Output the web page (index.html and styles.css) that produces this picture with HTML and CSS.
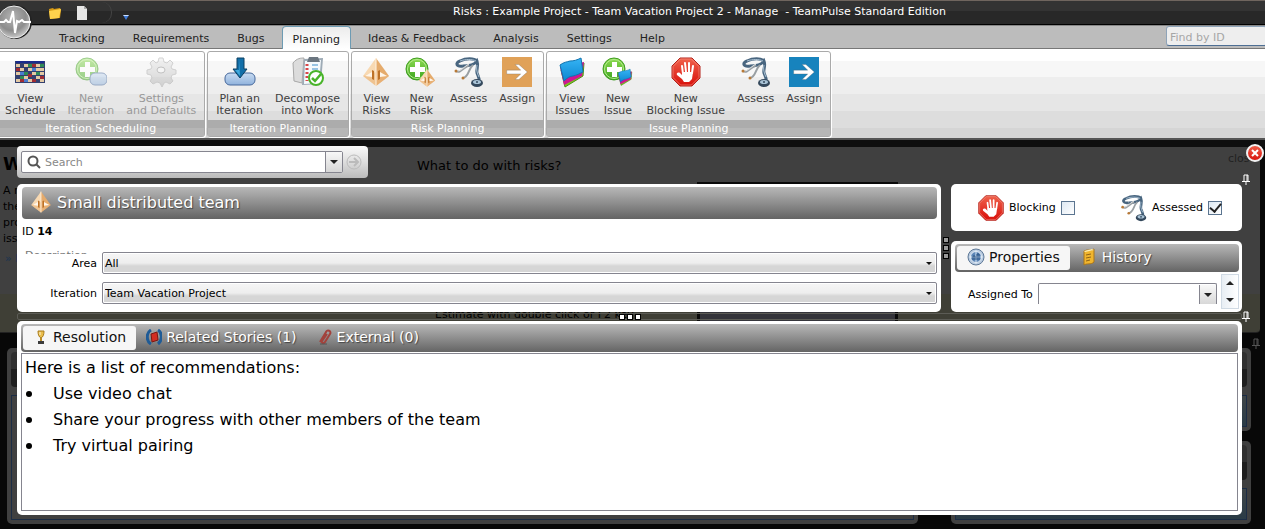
FILE: index.html
```html
<!DOCTYPE html>
<html lang="en">
<head>
  <meta charset="UTF-8">
  <meta name="viewport" content="width=device-width, initial-scale=1.0">
  <title>TeamPulse - Risks</title>
  <link rel="stylesheet" href="styles.css">
</head>
<body>
  <!-- shared icons -->
  <svg class="defs" width="0" height="0" aria-hidden="true">
    <defs>
      <linearGradient id="g-green" x1="0" y1="0" x2="0" y2="1"><stop offset="0" stop-color="#8edb52"/><stop offset="1" stop-color="#3aa41c"/></linearGradient>
      <linearGradient id="g-red" x1="0" y1="0" x2="0" y2="1"><stop offset="0" stop-color="#f0624c"/><stop offset="1" stop-color="#d80f0a"/></linearGradient>
      <linearGradient id="g-blue" x1="0" y1="0" x2="0" y2="1"><stop offset="0" stop-color="#36b4f5"/><stop offset="1" stop-color="#0b86d0"/></linearGradient>
      <linearGradient id="g-pill" x1="0" y1="0" x2="0" y2="1"><stop offset="0" stop-color="#c9dcf2"/><stop offset="1" stop-color="#8fb2dc"/></linearGradient>
      <linearGradient id="g-gear" x1="0" y1="0" x2="0" y2="1"><stop offset="0" stop-color="#ececec"/><stop offset="1" stop-color="#b4b4b4"/></linearGradient>
      <radialGradient id="g-ball" cx="0.45" cy="0.35" r="0.7"><stop offset="0" stop-color="#b4b4b4"/><stop offset="0.6" stop-color="#8c8c8c"/><stop offset="1" stop-color="#d8d8d8"/></radialGradient>
    </defs>
    <symbol id="i-risk" viewBox="0 0 32 32">
      <path d="M16 2L3 20l13 10z" fill="#f8d9b2"/>
      <path d="M16 2l13 18-13 10z" fill="#e5ab6c"/>
      <path d="M3 20l13-4 13 4-13 10z" fill="#e9b47a" opacity=".6"/>
      <path d="M12 14v9l2 1v-9zM20 14v9l-2 1v-9z" fill="#bd7126"/>
      <path d="M5 20l7-4v5zM27 20l-7-4v5z" fill="#fff6ea"/>
      <path d="M16 2v28" stroke="#fff3e2"/>
    </symbol>
    <symbol id="i-plus" viewBox="0 0 32 32">
      <circle cx="12" cy="13" r="11" fill="url(#g-green)" stroke="#3f9d22"/>
      <circle cx="12" cy="13" r="9.5" fill="none" stroke="#b5ec8d"/>
      <path d="M10 6h5v5h5v5h-5v5h-5v-5H5v-5h5z" fill="#fff"/>
    </symbol>
    <symbol id="i-pages" viewBox="0 0 32 32">
      <path d="M5 14l4 17 18-11 1-13z" fill="#7cc522" stroke="#4c9210"/>
      <path d="M4 11l4 18 18-9 2-14z" fill="#cf1691"/>
      <path d="M4 9c4-3 7-3 10-4 4 0 7-1 11-3l2 14c-4 2-6 3-10 4-3 0-6 2-9 5z" fill="url(#g-blue)" stroke="#1173af"/>
    </symbol>
    <symbol id="i-stop" viewBox="0 0 32 32">
      <path d="M10 2h12l8 8v12l-8 8H10l-8-8V10z" fill="url(#g-red)" stroke="#b3221a"/>
      <path d="M10.500 3h11l7.500 7.500v11L21.500 29h-11L3 21.500v-11z" fill="none" stroke="#f69a8a" opacity=".6"/>
      <path d="M12 10l1 8M15 7l1 9M19 7v10M23 10l-1 7" stroke="#fff" stroke-width="2" stroke-linecap="round"/>
      <path d="M12 16h11l-1 7-3 3h-5l-2-3-5-4c-1-2 1-3 3-2l2 2z" fill="#fff"/>
    </symbol>
    <symbol id="i-steth" viewBox="0 0 32 32">
      <path d="M10 10C3 11 2 7 7 5c6-3 14-3 17 0" fill="none" stroke="#48657f" stroke-width="3"/>
      <path d="M10 10c7 0 12-2 14-5 2 5-1 8 0 12 1 3 3 5 2 9" fill="none" stroke="#48657f" stroke-width="3"/>
      <path d="M7 5c6-2 12-2 16 0M24 9c-1 4 0 8 2 12" fill="none" stroke="#a9c0d2"/>
      <path d="M3 15c4 3 7-3 13-6M10 22c6-1 5-9 10-13" fill="none" stroke="#999fa3" stroke-width="2"/>
      <path d="M3 14c4 3 7-3 13-6" fill="none" stroke="#e3e5e6"/>
      <circle cx="3" cy="15" r="1.500" fill="#b87936"/><circle cx="10" cy="22" r="1.500" fill="#b87936"/>
      <ellipse cx="24" cy="27" rx="6" ry="4" fill="#34485c"/>
      <ellipse cx="24" cy="26" rx="4" ry="2" fill="#a9c3d6"/>
      <circle cx="24" cy="26" r="1" fill="#34485c"/>
    </symbol>
    <symbol id="i-arrow" viewBox="0 0 32 32">
      <path d="M5 14h15l-6-6h4l9 8-9 8h-4l6-6H5z" fill="#fff" stroke="#5b5b5b" stroke-opacity=".3"/>
    </symbol>
    <symbol id="i-pin" viewBox="0 0 8 11">
      <path d="M2 7V1h4v6M5 1v6M0 7.500h8M4 8v3" fill="none" stroke="currentColor"/>
    </symbol>
  </svg>

  <header class="title-bar">
    <div class="quick-access">
      <button type="button" aria-label="Open">
        <svg width="14" height="14" viewBox="0 0 14 14"><path d="M1 3l4-1 1 1 6-1 1 2-1 8-10 1z" fill="#d79a14"/><path d="M1 5l12-2-2 9-9 1z" fill="#ffd34d"/></svg>
      </button>
      <button type="button" aria-label="New">
        <svg width="12" height="14" viewBox="0 0 12 14"><path d="M1 0h7l3 3v11H1z" fill="#e6e6e6"/><path d="M8 0v3h3z" fill="#aaa"/></svg>
      </button>
    </div>
    <button type="button" class="quick-more" aria-label="More">
      <svg width="6" height="5" viewBox="0 0 6 5"><path d="M0 0h6L3 5z" fill="#3d79d8"/><path d="M0 0h6L5 1H1z" fill="#cfe0fa"/></svg>
    </button>
    <span class="window-title">Risks : Example Project - Team Vacation Project 2 - Manage &nbsp;- TeamPulse Standard Edition</span>
    <button type="button" class="app-button" aria-label="TeamPulse menu">
      <svg width="36" height="38" viewBox="0 0 36 38">
        <circle cx="17" cy="19" r="17" fill="#222"/>
        <circle cx="16" cy="19" r="16" fill="url(#g-ball)" stroke="#eee"/>
        <path d="M0 19h6l2-2 2 2h2l3-11 2 22 2-12 2 1 3-2 2 2h7" fill="none" stroke="#fff" stroke-width="2"/>
      </svg>
    </button>
  </header>

  <nav class="tabs">
    <button type="button">Tracking</button>
    <button type="button">Requirements</button>
    <button type="button">Bugs</button>
    <button type="button" class="active">Planning</button>
    <button type="button">Ideas &amp; Feedback</button>
    <button type="button">Analysis</button>
    <button type="button">Settings</button>
    <button type="button">Help</button>
    <input type="text" class="find" placeholder="Find by ID" aria-label="Find by ID">
  </nav>

  <div class="ribbon">
    <section class="group first">
      <div class="tools">
        <button type="button">
          <svg width="32" height="32" viewBox="0 0 32 32">
            <path d="M1 5h30v22H1z" fill="#33406f"/>
            <path d="M2 8h4v3H2zM10 8h4v3h-4zM22 8h4v3h-4zM6 12h4v3H6zM14 12h4v3h-4zM22 12h8v3h-8zM2 16h4v3H2zM18 16h4v3h-4zM26 16h4v3h-4zM10 20h4v3h-4zM22 20h4v3h-4zM2 23h4v3H2zM14 23h4v3h-4zM26 23h4v3h-4z" fill="#e3c9a4"/>
            <path d="M14 8h4v3h-4zM10 16h4v3h-4zM26 8h4v3h-4zM22 16h4v3h-4zM6 20h4v3H6z" fill="#2f8a56"/>
            <path d="M18 8h4v3h-4zM2 12h4v3H2zM14 18h4v3h-4zM26 20h4v3h-4zM18 23h4v3h-4zM6 23h4v3H6z" fill="#a02c34"/>
            <path d="M18 12h4v3h-4zM6 16h4v3H6zM10 23h4v3h-4z" fill="#4a7cd0"/>
            <path d="M2 6h28" stroke="#1a2c8c" stroke-width="2"/>
          </svg>
          <span>View<br>Schedule</span>
        </button>
        <button type="button" disabled>
          <svg width="32" height="32" viewBox="0 0 32 32"><use href="#i-plus"/><rect x="15" y="17" width="17" height="12" rx="5" fill="url(#g-pill)" stroke="#47699c"/></svg>
          <span>New<br>Iteration</span>
        </button>
        <button type="button" disabled>
          <svg width="32" height="32" viewBox="0 0 32 32">
            <path d="M14 2h4l1 4 3 1 3-3 3 3-2 4 1 2 4 1v4l-4 1-1 3 2 3-3 3-4-2-2 1-2 4-2-4-3-1-4 2-3-3 2-3-1-3-4-1v-4l4-1 1-2-2-4 3-3 3 3 2-1z" fill="url(#g-gear)" stroke="#aaa"/>
            <ellipse cx="16" cy="14" rx="4" ry="3" fill="#f4f4f4" stroke="#8c8c8c"/>
          </svg>
          <span>Settings<br>and Defaults</span>
        </button>
      </div>
      <h2>Iteration Scheduling</h2>
    </section>
    <section class="group">
      <div class="tools">
        <button type="button">
          <svg width="32" height="32" viewBox="0 0 32 32"><rect x="1" y="17" width="30" height="12" rx="5" fill="url(#g-pill)" stroke="#47699c"/><path d="M13 2h7v11h3l-7 9-7-9h4z" fill="#126fa9" stroke="#0c4063"/><path d="M15 3v11h-4l5 6z" fill="#3fa8dc"/></svg>
          <span>Plan an<br>Iteration</span>
        </button>
        <button type="button">
          <svg width="32" height="32" viewBox="0 0 32 32">
            <path d="M1 7c4-5 8-5 11-5l-2 25-8-2z" fill="#dcdcdc" stroke="#a8a8a8"/>
            <path d="M12 3l19-1-2 26-19 1z" fill="#9eabb6"/>
            <path d="M13 5l16-1-2 23-15 1z" fill="#f5fafd"/>
            <path d="M17 1h9l2 5H15z" fill="#6b7680"/>
            <path d="M15 8v17" stroke="#d8484a" stroke-width="3" stroke-dasharray="2 2"/>
            <path d="M20 9h6M20 13h6M20 17h5" stroke="#98c4e4" stroke-width="2"/>
            <circle cx="24" cy="22" r="7" fill="#fff" stroke="#49b42a" stroke-width="2"/>
            <path d="M20 22l3 3 6-7" fill="none" stroke="#49b42a" stroke-width="2.500"/>
          </svg>
          <span>Decompose<br>into Work</span>
        </button>
      </div>
      <h2>Iteration Planning</h2>
    </section>
    <section class="group">
      <div class="tools">
        <button type="button"><svg width="32" height="32"><use href="#i-risk"/></svg><span>View<br>Risks</span></button>
        <button type="button"><svg width="32" height="32" viewBox="0 0 32 32"><use href="#i-plus"/><use href="#i-risk" x="12" y="12" width="20" height="20"/></svg><span>New<br>Risk</span></button>
        <button type="button"><svg width="32" height="32"><use href="#i-steth"/></svg><span>Assess</span></button>
        <button type="button"><svg class="assign risk" width="30" height="30"><use href="#i-arrow"/></svg><span>Assign</span></button>
      </div>
      <h2>Risk Planning</h2>
    </section>
    <section class="group">
      <div class="tools">
        <button type="button"><svg width="32" height="32"><use href="#i-pages"/></svg><span>View<br>Issues</span></button>
        <button type="button"><svg width="32" height="32" viewBox="0 0 32 32"><use href="#i-plus"/><use href="#i-pages" x="14" y="12" width="18" height="18"/></svg><span>New<br>Issue</span></button>
        <button type="button"><svg width="32" height="32"><use href="#i-stop"/></svg><span>New<br>Blocking Issue</span></button>
        <button type="button"><svg width="32" height="32"><use href="#i-steth"/></svg><span>Assess</span></button>
        <button type="button"><svg class="assign issue" width="30" height="30"><use href="#i-arrow"/></svg><span>Assign</span></button>
      </div>
      <h2>Issue Planning</h2>
    </section>
  </div>

  <main class="workspace">
    <!-- dimmed page under the editor -->
    <div class="backdrop">
      <div class="help">
        <div class="help-side">
          <h1>W</h1>
          <p>A r<br>the<br>pro<br>iss</p>
          <a href="#">» P</a>
        </div>
        <div class="help-main">
          <h3>What to do with risks?</h3>
          <div class="shot"></div>
          <p>Estimate with double click or F2 key</p>
        </div>
        <span class="close-text">close</span>
      </div>
      <svg class="pin dim" width="8" height="11"><use href="#i-pin"/></svg>
      <div class="boards">
        <div class="board"><div class="board-head"></div><div class="board-body"></div></div>
        <div class="board-col">
          <div class="board"><div class="board-head"></div><div class="board-body"></div></div>
          <div class="board"><div class="board-head"></div><div class="board-body"></div></div>
        </div>
      </div>
    </div>

    <div class="editor">
      <form class="search-panel">
        <div class="search-box">
          <svg width="14" height="14" viewBox="0 0 14 14"><circle cx="6" cy="6" r="4.500" fill="none" stroke="#555" stroke-width="2"/><path d="M9 9l4 4" stroke="#555" stroke-width="2"/></svg>
          <input type="text" placeholder="Search" aria-label="Search">
          <button type="button" class="drop" aria-label="Search options"></button>
        </div>
        <button type="button" class="go" aria-label="Go">
          <svg width="16" height="16" viewBox="0 0 16 16"><circle cx="8" cy="8" r="7" fill="none" stroke="#bbb"/><path d="M3 8h9M8 4l4 4-4 4" fill="none" stroke="#bbb" stroke-width="2"/></svg>
        </button>
      </form>

      <div class="top-row">
        <section class="card details">
          <h2 class="bar heading"><svg width="24" height="24"><use href="#i-risk"/></svg>Small distributed team</h2>
          <p class="item-id">ID <b>14</b></p>
          <div class="description">Description</div>
          <div class="field">
            <label for="area">Area</label>
            <div class="select"><select id="area"><option>All</option></select></div>
          </div>
          <div class="field">
            <label for="iteration">Iteration</label>
            <div class="select"><select id="iteration"><option>Team Vacation Project</option></select></div>
          </div>
        </section>
        <div class="splitter-v"><i></i><i></i><i></i></div>
        <div class="side">
          <section class="card flags">
            <label><svg width="28" height="28"><use href="#i-stop"/></svg>Blocking <input type="checkbox"></label>
            <label><svg width="28" height="28"><use href="#i-steth"/></svg>Assessed <input type="checkbox" checked></label>
          </section>
          <section class="card props">
            <div class="bar tab-bar">
              <button type="button" class="active">
                <svg width="18" height="18" viewBox="0 0 18 18"><circle cx="9" cy="9" r="8" fill="#b9cbe0" stroke="#5d7896"/><circle cx="9" cy="9" r="5.500" fill="#5d87b8" stroke="#e6eef6"/><path d="M9 2v14M2 9h14" stroke="#dce8f4"/><path d="M6 12V8h2v4M10 12V6h2v6" stroke="#2b5382" fill="none"/></svg>
                Properties
              </button>
              <button type="button">
                <svg width="18" height="18" viewBox="0 0 18 18"><path d="M4 3c3-2 7 0 10-2v13c-3 3-7 1-10 3z" fill="#f0b52e" stroke="#a8741a"/><path d="M6 7l5-1M6 10l5-1M6 13l4-1" stroke="#8f6315"/><path d="M4 3l8-2 2 1-9 2z" fill="#fff0b5"/></svg>
                History
              </button>
            </div>
            <div class="props-body">
              <div class="assigned">
                <label for="assigned">Assigned To</label>
                <div class="combo"><input type="text" id="assigned"><button type="button" class="drop" aria-label="Choose person"></button></div>
              </div>
              <div class="scroller"><button type="button" class="up" aria-label="Scroll up"></button><button type="button" class="down" aria-label="Scroll down"></button></div>
            </div>
          </section>
        </div>
      </div>

      <div class="splitter-h"><i></i><i></i><i></i></div>

      <section class="card notes">
        <div class="bar tab-bar">
          <button type="button" class="active">
            <svg width="16" height="16" viewBox="0 0 16 16"><path d="M5 2h6c0 4-1 6-3 7-2-1-3-3-3-7z" fill="#e9bd4c" stroke="#a87b1c"/><path d="M7 3v3" stroke="#fff6d2"/><path d="M8 9v3" stroke="#b98a25" stroke-width="2"/><path d="M5 12h6v3H5z" fill="#3c3c3c"/></svg>
            Resolution
          </button>
          <button type="button">
            <svg width="16" height="16" viewBox="0 0 16 16"><path d="M5 5l6-2 1 8-6 2z" fill="#d22d22" stroke="#7c1712"/><path d="M5 1C0 4 0 12 5 15M12 1c5 3 4 11 0 14" fill="none" stroke="#1f5b96" stroke-width="3"/></svg>
            Related Stories (1)
          </button>
          <button type="button">
            <svg width="16" height="16" viewBox="0 0 16 16"><path d="M3 13L9 3c1-3 6-1 4 2l-5 8c-1 2-4 1-3-1l5-7" fill="none" stroke="#a2423c" stroke-width="2"/><path d="M3 15h7" stroke="#555"/></svg>
            External (0)
          </button>
        </div>
        <div class="notes-body">
          <p>Here is a list of recommendations:</p>
          <ul>
            <li>Use video chat</li>
            <li>Share your progress with other members of the team</li>
            <li>Try virtual pairing</li>
          </ul>
        </div>
      </section>
    </div>

    <button type="button" class="close" aria-label="Close">
      <svg width="18" height="18" viewBox="0 0 18 18"><circle cx="9" cy="9" r="8" fill="url(#g-red)" stroke="#f2f2f2" stroke-width="2"/><path d="M6 6l6 6M12 6l-6 6" stroke="#fff" stroke-width="2"/></svg>
    </button>
    <svg class="pin pin-top" width="8" height="11"><use href="#i-pin"/></svg>
    <svg class="pin pin-mid" width="8" height="11"><use href="#i-pin"/></svg>
  </main>
</body>
</html>
```

FILE: styles.css
```css
* {
  box-sizing: border-box;
}
body {
  margin: 0;
  min-height: 100vh;
  display: flex;
  flex-direction: column;
  overflow: hidden;
  background: #080808;
  font-family: "DejaVu Sans", Verdana, sans-serif;
  font-size: 11px;
  color: #000;
}
button, input, select {
  font: inherit;
  color: inherit;
}
button {
  margin: 0;
  padding: 0;
  border: 0;
  background: none;
}
h1, h2, h3, p, ul {
  margin: 0;
  padding: 0;
  font-weight: normal;
}
svg {
  display: block;
  flex: none;
}
.defs {
  position: absolute;
}

/* title bar */
.title-bar {
  position: relative;
  display: flex;
  align-items: center;
  height: 25px;
  border-top: 1px solid #6f655e;
  border-bottom: 1px solid #000;
  background: linear-gradient(#333 10px, #282828 10px);
}
.quick-access {
  display: flex;
  align-items: center;
  gap: 14px;
  width: 112px;
  height: 21px;
  padding-left: 48px;
  border-right: 1px solid #444;
  border-radius: 0 10px 10px 0;
}
.quick-more {
  margin: 10px 0 0 11px;
}
.window-title {
  flex: 1;
  padding: 0 0 2px 5px;
  text-align: center;
  color: #fff;
  white-space: pre;
}
.app-button {
  position: absolute;
  left: -2px;
  top: 2px;
  z-index: 2;
}

/* tabs */
.tabs {
  display: flex;
  align-items: flex-end;
  height: 24px;
  padding-left: 45px;
  border-top: 1px solid #888;
  border-bottom: 1px solid #777;
  background: #bcbcbc;
}
.tabs button {
  height: 22px;
  padding: 2px 13px 0;
  border: 1px solid transparent;
  border-bottom: 0;
  color: #222;
}
.tabs .active {
  padding: 2px 10px 0;
  margin: 0 3px -1px;
  height: 23px;
  border-color: #6d9bb3;
  border-radius: 4px 4px 0 0;
  background: linear-gradient(#ececec, #fff);
}
.find {
  width: 101px;
  height: 20px;
  margin: 0 -2px 2px auto;
  padding: 2px 3px 0;
  border: 1px solid #8ea3b8;
  border-bottom-color: #4e6f94;
  border-radius: 3px;
  background: #eee;
}
.find::placeholder {
  color: #a6a6a6;
  opacity: 1;
}

/* ribbon */
.ribbon {
  display: flex;
  gap: 2px;
  padding: 2px 0 1px;
  border-bottom: 2px solid #555;
  background: linear-gradient(#fff 12px, #f7f7f7 12px 28px, #eee 28px 45px, #e6e6e6 45px 62px, #ddd 62px 79px, #d5d5d5 79px);
}
.group {
  border: 1px solid #aaa;
  border-radius: 3px;
  box-shadow: 1px 1px 0 #fff;
}
.group.first {
  margin-left: -4px;
}
.group h2 {
  height: 16px;
  line-height: 17px;
  font-size: 11px;
  text-align: center;
  color: #fff;
  background: linear-gradient(#acacac 8px, #b6b6b6 8px);
}
.tools {
  display: flex;
  height: 68px;
  padding: 4px 2px 0;
}
.tools button {
  display: flex;
  flex-direction: column;
  align-items: center;
  min-width: 45px;
  padding: 0 6px;
  line-height: 12px;
  color: #404040;
}
.tools span {
  margin-top: 5px;
}
.tools button:disabled {
  color: #999;
}
.tools button:disabled svg {
  opacity: .5;
}
.assign {
  margin: 1px;
}
.assign.risk {
  background: #e0a158;
}
.assign.issue {
  background: #1783bd;
}

/* dimmed page */
.workspace {
  position: relative;
  flex: 1;
  display: flex;
  flex-direction: column;
  padding-top: 7px;
  background: #0e0e0e;
}
.backdrop {
  flex: 1;
  display: flex;
  flex-direction: column;
  background: #080808;
}
.help {
  display: flex;
  height: 186px;
  margin-right: 5px;
  overflow: hidden;
  border-bottom: 1px solid #222;
  border-radius: 0 0 4px 0;
  background: linear-gradient(#404040 147px, #3f3f36 147px);
}
.help-side {
  width: 417px;
  padding: 5px 0 0 3px;
}
.help-side h1 {
  font-size: 18px;
  font-weight: bold;
  line-height: 24px;
}
.help-side p {
  padding-top: 7px;
  line-height: 16px;
}
.help-side a {
  display: block;
  padding: 5px 2px;
  color: #1a3450;
  text-decoration: none;
}
.help-main {
  flex: 1;
}
.help-main h3 {
  padding-top: 11px;
  font-size: 13px;
  line-height: 16px;
}
.help-main p {
  margin-top: -34px;
  padding-left: 18px;
  line-height: 14px;
}
.shot {
  width: 201px;
  height: 160px;
  margin: 8px 0 0 280px;
  border: 3px solid #0a0a0a;
  background: #34343a;
}
.close-text {
  width: 32px;
  padding-top: 5px;
  color: #222;
}
.pin {
  color: #fff;
}
.pin.dim {
  margin: 5px 5px -11px auto;
  color: #555;
}
.boards {
  flex: 1;
  display: flex;
  gap: 33px;
  margin: 10px 14px 5px 7px;
}
.board {
  flex: 1;
  display: flex;
  flex-direction: column;
  padding: 4px;
  border-radius: 5px;
  background: #404040;
}
.board-head {
  height: 35px;
  border-radius: 4px;
  background: linear-gradient(#303030 50%, #1e1e1e 50%);
}
.board-body {
  flex: 1;
  margin-top: 8px;
  border: 1px solid #1c2c44;
  background: linear-gradient(#404648, #2a3b46);
}
.boards > .board > .board-body {
  background: #404040;
}
.board-col {
  display: flex;
  flex-direction: column;
  gap: 10px;
  width: 300px;
}

/* editor laid over the page */
.editor {
  position: absolute;
  inset: 6px 23px 14px 17px;
  display: flex;
  flex-direction: column;
}
.card {
  border-radius: 5px;
  background: #fff;
}
.bar {
  border-radius: 4px;
  background: linear-gradient(#b8b8b8, #646464);
  color: #fff;
  text-shadow: 1px 1px 1px #444;
}
.search-panel {
  display: flex;
  align-items: center;
  gap: 2px;
  width: 351px;
  height: 32px;
  padding: 0 4px;
  border-radius: 4px;
  background: linear-gradient(#fafafa, #ddd 50%, #bbb);
}
.search-box {
  flex: 1;
  display: flex;
  align-items: center;
  height: 22px;
  padding-left: 5px;
  border: 1px solid #85858f;
  border-radius: 2px;
  background: #fff;
}
.search-box input, .combo input {
  flex: 1;
  min-width: 0;
  padding: 0 4px;
  border: 0;
  background: none;
}
.search-box input::placeholder {
  color: #888;
  opacity: 1;
}
.drop {
  width: 17px;
  height: 20px;
  border-left: 1px solid #85858f;
  background: linear-gradient(#f8f8f8, #d6d6d6);
}
.drop::after, .scroller button::after {
  content: "";
  display: block;
  width: 0;
  margin: 0 auto;
  border: 4px solid transparent;
  border-top-color: #222;
  border-bottom: 0;
}
.go {
  padding: 0 2px 0 1px;
}
.top-row {
  display: flex;
  height: 128px;
  margin-top: 6px;
}
.details {
  flex: 1;
  padding: 3px 4px 0 5px;
}
.heading {
  display: flex;
  align-items: center;
  gap: 4px;
  height: 32px;
  padding: 0 7px 2px;
  font-size: 16px;
}
.item-id {
  padding-top: 6px;
  line-height: 14px;
}
/* collapsed row, only its upper edge shows */
.description {
  height: 4px;
  margin: 11px 0 -2px 3px;
  overflow: hidden;
  line-height: 12px;
  color: #777;
}
.field {
  display: flex;
  align-items: center;
  margin-bottom: 8px;
}
.field label {
  width: 80px;
  padding-right: 5px;
  text-align: right;
}
.select {
  position: relative;
  flex: 1;
}
.select::after {
  content: "";
  position: absolute;
  right: 5px;
  top: 10px;
  border: 3px solid transparent;
  border-top-color: #111;
  border-bottom: 0;
  pointer-events: none;
}
.select select {
  display: block;
  width: 100%;
  height: 22px;
  padding: 0 2px;
  appearance: none;
  border: 1px solid #85858f;
  border-radius: 2px;
  background: linear-gradient(#f6f6f6, #eee 10px, #d6d6d6 13px);
  box-shadow: inset 0 0 0 1px #fff;
}
.splitter-v {
  display: flex;
  flex-direction: column;
  align-items: center;
  justify-content: center;
  gap: 2px;
  width: 10px;
}
.splitter-v i, .splitter-h i {
  width: 6px;
  height: 6px;
  border: 1px solid #000;
  background: #999;
}
.splitter-h {
  display: flex;
  justify-content: center;
  align-items: center;
  gap: 2px;
  height: 7px;
  margin: 1px 0;
  border: 1px solid #5c5c56;
  border-radius: 2px;
}
.splitter-h i {
  background: #fff;
}
.side {
  display: flex;
  flex-direction: column;
  gap: 10px;
  width: 291px;
}
.flags {
  display: flex;
  justify-content: space-between;
  height: 47px;
  padding: 0 20px 0 26px;
}
.flags label {
  display: flex;
  align-items: center;
  gap: 4px;
}
.flags input {
  appearance: none;
  display: grid;
  place-items: center;
  width: 14px;
  height: 14px;
  margin: 0 0 0 1px;
  border: 1px solid #5b7590;
  background: linear-gradient(135deg, #dde8f2, #fff);
}
.flags input:checked::after {
  content: "";
  width: 5px;
  height: 9px;
  margin-top: -2px;
  border: solid #222;
  border-width: 0 2px 2px 0;
  transform: rotate(40deg);
}
.props {
  flex: 1;
  display: flex;
  flex-direction: column;
  min-height: 0;
  padding: 3px 3px 3px 4px;
}
.tab-bar {
  display: flex;
  height: 28px;
  padding: 2px;
}
.tab-bar button {
  display: flex;
  align-items: center;
  gap: 4px;
  padding: 0 10px 2px;
  font-size: 14px;
  text-shadow: inherit;
}
.tab-bar .active {
  border-radius: 3px;
  background: #f6f6f6;
  color: #111;
  text-shadow: none;
}
.props-body {
  flex: 1;
  display: flex;
  justify-content: space-between;
  min-height: 0;
  padding-top: 2px;
}
.assigned {
  flex: 1;
  display: flex;
  align-items: center;
  gap: 5px;
  height: 30px;
  padding: 10px 4px 0 13px;
  overflow: hidden;
}
.combo {
  flex: 1;
  display: flex;
  align-items: center;
  height: 22px;
  border: 1px solid #85858f;
  border-bottom: 0;
  border-radius: 2px 2px 0 0;
}
.combo input {
  width: 100%;
}
.scroller {
  display: flex;
  flex-direction: column;
  justify-content: space-around;
  width: 18px;
  border: 1px solid #d0dae4;
  background: linear-gradient(90deg, #e8eef4, #fff);
}
.scroller .up::after {
  transform: rotate(180deg);
}

.notes {
  flex: 1;
  display: flex;
  flex-direction: column;
  padding: 3px 4px 4px;
}
.notes-body {
  flex: 1;
  margin-top: 1px;
  padding: 1px 3px;
  border: 1px solid #85858f;
  font-size: 16px;
  line-height: 26px;
}
.notes-body ul {
  list-style: none;
}
.notes-body li {
  display: flex;
  align-items: center;
}
.notes-body li::before {
  content: "";
  width: 6px;
  height: 6px;
  margin: 0 21px 0 1px;
  border-radius: 50%;
  background: #000;
}

.close, .pin-top, .pin-mid {
  position: absolute;
}
.close {
  top: 4px;
  right: 1px;
}
.pin-top {
  top: 34px;
  right: 15px;
}
.pin-mid {
  top: 171px;
  right: 15px;
}
```
